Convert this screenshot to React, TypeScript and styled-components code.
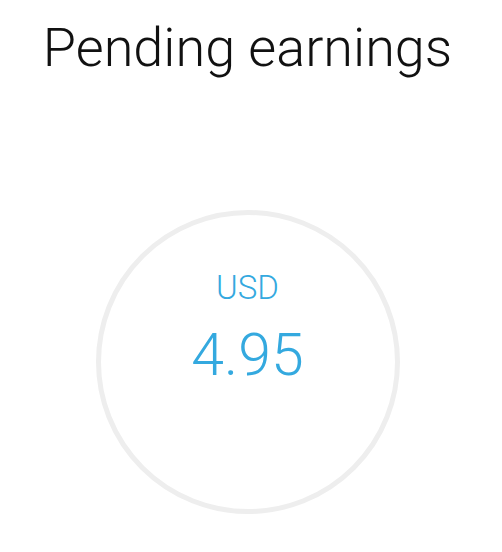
import React from "react";
import styled, { createGlobalStyle } from "styled-components";

const GlobalStyle = createGlobalStyle`
  html, body {
    margin: 0;
    padding: 0;
    background: #ffffff;
  }
  body {
    font-family: Roboto, "Noto Sans", sans-serif;
  }
`;

const Page = styled.div`
  width: 495px;
  display: flex;
  flex-direction: column;
  align-items: center;
  padding-top: 15px;
`;

const Title = styled.h1`
  margin: 0;
  font-size: 54px;
  font-weight: 300;
  color: #111111;
  line-height: 66px;
`;

const Ring = styled.div`
  margin-top: 129px;
  width: 294px;
  height: 240px;
  padding-top: 54px;
  border-radius: 50%;
  border: 5px solid #eeeeee;
  display: flex;
  flex-direction: column;
  align-items: center;
`;

const Currency = styled.div`
  font-size: 33px;
  font-weight: 300;
  color: #34a9df;
  line-height: 38px;
`;

const Amount = styled.div`
  margin-top: 13px;
  font-size: 59px;
  font-weight: 300;
  color: #34a9df;
  line-height: 70px;
`;

export default function App() {
  return (
    <>
      <GlobalStyle />
      <Page>
        <Title>Pending earnings</Title>
        <Ring>
          <Currency>USD</Currency>
          <Amount>4.95</Amount>
        </Ring>
      </Page>
    </>
  );
}
